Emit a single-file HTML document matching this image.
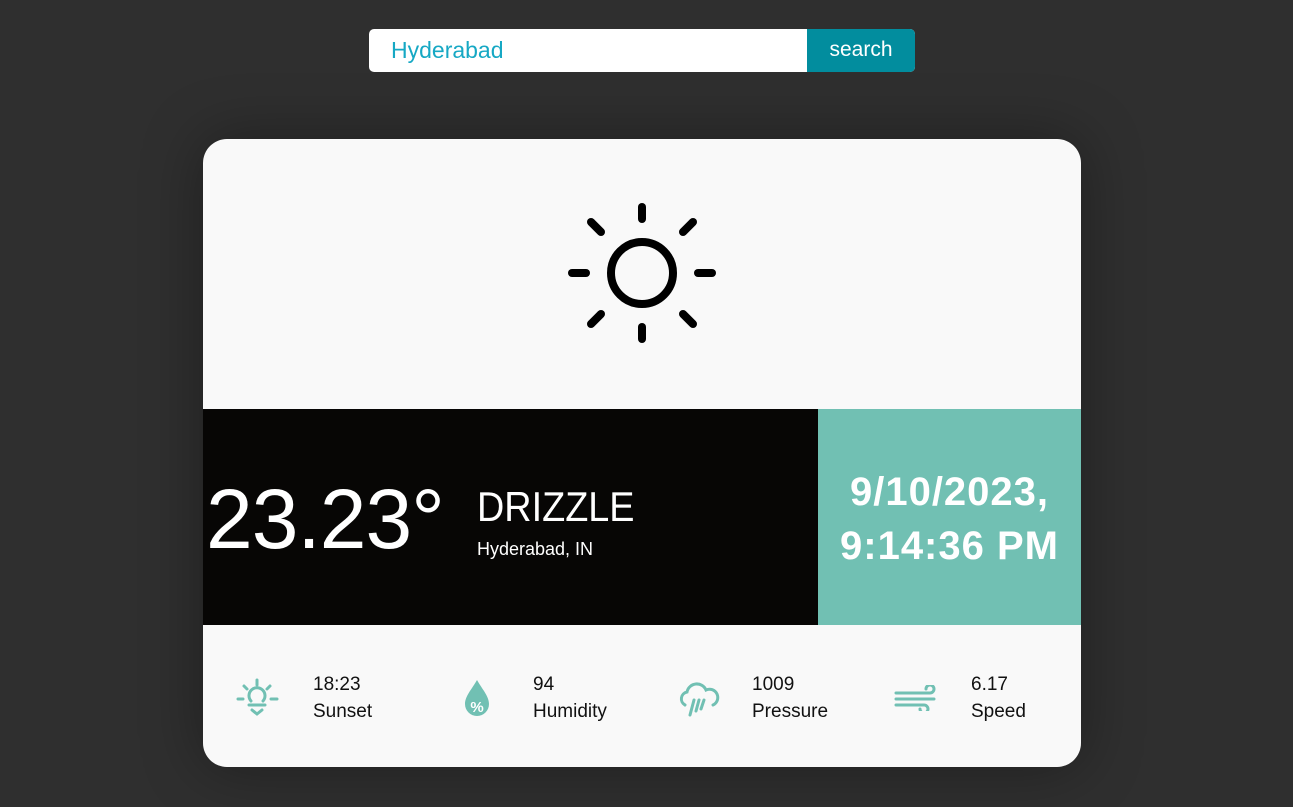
<!DOCTYPE html>
<html><head><style>
body{margin:0;width:1293px;height:807px;background:#2f2f2f;font-family:"Liberation Sans",sans-serif;position:relative;overflow:hidden}
.search{position:absolute;left:369px;top:29px;width:546px;height:43px;border-radius:5px;overflow:hidden;background:#fff}
.search .t{position:absolute;left:22px;top:8px;font-size:23px;color:#16a8c4}
.search .b{position:absolute;right:0;top:0;width:108px;height:43px;background:#028d9e;color:#fff;font-size:21px;text-align:center;line-height:41px}
.card{position:absolute;left:203px;top:139px;width:878px;height:628px;background:#f9f9f9;border-radius:24px;overflow:hidden;box-shadow:0 0 60px rgba(0,0,0,.35)}
.band{position:absolute;left:0;top:270px;width:615px;height:216px;background:#070605;color:#fff}
.teal{position:absolute;left:615px;top:270px;width:263px;height:216px;background:#71c0b3;color:#fff;font-weight:bold;font-size:40px;letter-spacing:1px;text-align:center;line-height:54px;padding-top:56px;box-sizing:border-box}
.temp{position:absolute;left:3px;font-size:84px;font-weight:300;color:#fff;letter-spacing:-1px}
.cond{position:absolute;left:274px;font-size:42px;color:#fff;transform:scaleX(0.9);transform-origin:left}
.city{position:absolute;left:274px;font-size:18px;color:#fff}
.it{position:absolute;top:532px;font-size:19px;line-height:27px;color:#111}
svg.i{position:absolute}
</style></head><body>
<div class="search"><div class="t">Hyderabad</div><div class="b">search</div></div>
<div class="card">
<svg width="878" height="270" style="position:absolute;left:0;top:0">
<g stroke="#000" stroke-width="8" stroke-linecap="round" fill="none" transform="translate(439,134)">
<circle r="31"/>
<line x1="0" y1="-54" x2="0" y2="-66"/><line x1="0" y1="54" x2="0" y2="66"/>
<line x1="-56" y1="0" x2="-70" y2="0"/><line x1="56" y1="0" x2="70" y2="0"/>
<line x1="-41" y1="-41" x2="-51" y2="-51"/><line x1="41" y1="-41" x2="51" y2="-51"/>
<line x1="-41" y1="41" x2="-51" y2="51"/><line x1="41" y1="41" x2="51" y2="51"/>
</g></svg>
<div class="band"><div class="temp" style="top:62px">23.23°</div><div class="cond" style="top:74px">DRIZZLE</div><div class="city" style="top:130px">Hyderabad, IN</div></div>
<div class="teal">9/10/2023,<br>9:14:36 PM</div>
<svg class="i" style="left:32px;top:538px" width="48" height="44" fill="none" stroke="#71c0b3" stroke-width="3" stroke-linecap="round">
<path d="M16 24a8 8 0 1 1 12 0"/><line x1="3" y1="22" x2="8" y2="22"/><line x1="36" y1="22" x2="42" y2="22"/><line x1="22" y1="3" x2="22" y2="8"/><line x1="9" y1="9" x2="12" y2="12"/><line x1="35" y1="9" x2="32" y2="12"/><line x1="14" y1="28" x2="30" y2="28"/><path d="M17 33l5 4 5-4"/></svg>
<svg class="i" style="left:259px;top:540px" width="34" height="40"><path d="M15 1C10 10 3 17 3 25a12 12 0 0 0 24 0C27 17 20 10 15 1z" fill="#71c0b3"/><text x="15" y="33" font-size="15" font-weight="bold" text-anchor="middle" fill="#fff" font-family="Liberation Sans">%</text></svg>
<svg class="i" style="left:474px;top:542px" width="44" height="40" fill="none" stroke="#71c0b3" stroke-width="3" stroke-linecap="round"><path d="M8 24a7 7 0 0 1 2-13 10 10 0 0 1 19-2 8 8 0 0 1 7 15"/><line x1="17" y1="19" x2="13" y2="34"/><line x1="22" y1="19" x2="19" y2="30"/><line x1="27" y1="19" x2="24" y2="28"/></svg>
<svg class="i" style="left:691px;top:546px" width="46" height="26" fill="none" stroke="#71c0b3" stroke-width="3" stroke-linecap="round"><path d="M2 8h34a4 4 0 1 0-4-4"/><path d="M2 14h38"/><path d="M2 20h28a4 4 0 1 1-4 4"/></svg>
<div class="it" style="left:110px">18:23<br>Sunset</div>
<div class="it" style="left:330px">94<br>Humidity</div>
<div class="it" style="left:549px">1009<br>Pressure</div>
<div class="it" style="left:768px">6.17<br>Speed</div>
</div>
</body></html>
